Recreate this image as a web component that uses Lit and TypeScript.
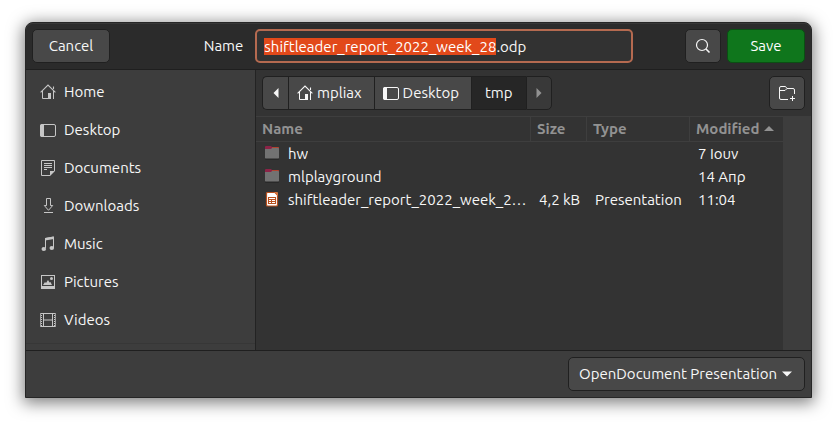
import { LitElement, html, css, svg, nothing } from "lit";
import type { TemplateResult, SVGTemplateResult } from "lit";
import { customElement, property, query } from "lit/decorators.js";

const glyphs: Record<string, SVGTemplateResult> = {
  home: svg`
    <path d="M.6 8.4 8 1l7.4 7.4M13.5 5V2.5" fill="none" stroke="currentColor" stroke-width="1.1"/>
    <path d="M2.5 7v7.5H9M13.5 7v8" fill="none" stroke="currentColor"/>
    <path d="M8 9h3v6H8z" fill="currentColor"/>`,
  desktop: svg`
    <rect x=".5" y="2.5" width="15" height="12" rx="1.5" fill="none" stroke="currentColor"/>
    <path d="M2 2h2v13H2A2 2 0 0 1 0 13V4a2 2 0 0 1 2-2z" fill="currentColor"/>`,
  documents: svg`
    <path d="M10 15.5H1.5V.5h13V11" fill="none" stroke="currentColor"/>
    <path d="M10 11h5l-5 5zM4 3h8v1H4zM4 5h8v1H4zM4 7h8v1H4zM4 9h3v1H4z" fill="currentColor"/>`,
  downloads: svg`
    <path d="M6.500 .5h4v7h2.200L8.500 12.300 4.300 7.500h2.200z" fill="none" stroke="currentColor"/>
    <path d="M4 14h9v1H4z" fill="currentColor"/>`,
  music: svg`
    <path d="M5.500 12V2.500l8-1.500v11" fill="none" stroke="currentColor"/>
    <path d="M5 2l9-1.500v2.500L5 4.500z" fill="currentColor"/>
    <ellipse cx="3.800" cy="13" rx="2.300" ry="1.900" fill="currentColor"/>
    <ellipse cx="11.800" cy="12" rx="2.300" ry="1.900" fill="currentColor"/>`,
  pictures: svg`
    <path fill-rule="evenodd" d="M1 1h14v14H1zM2 2v10h12V2z" fill="currentColor"/>
    <path d="M3 11l2-3 1 1 2-3 1.500 2.500L10.500 8 12 11z" fill="currentColor"/>
    <circle cx="11.500" cy="4.500" r="1.500" fill="currentColor"/>`,
  videos: svg`
    <path d="M3.500 1.500h9v13h-9zM3.500 8h9" fill="none" stroke="currentColor"/>
    <path d="M1.500 1v14M14.500 1v14" fill="none" stroke="currentColor" stroke-dasharray="1 1"/>
    <path d="M.5 1v14M15.500 1v14" fill="none" stroke="currentColor" opacity=".7"/>
    <path d="M1 1h14v1H1zM1 14h14v1H1z" fill="currentColor"/>`,
  search: svg`
    <circle cx="7" cy="7" r="5.500" fill="none" stroke="currentColor" stroke-width="1.200"/>
    <path d="M11 11l3.500 3.500" fill="none" stroke="currentColor" stroke-width="1.600"/>`,
  newFolder: svg`
    <path d="M9 14.500H2A1.500 1.500 0 0 1 .5 13V3A1.500 1.500 0 0 1 2 1.500h4.500L8 3.500h6A1.500 1.500 0 0 1 15.500 5v4M.5 5.500H6l2-2" fill="none" stroke="currentColor"/>
    <path d="M13.500 11v5M11 13.500h5" fill="none" stroke="currentColor"/>`,
  left: svg`<path d="M10.500 3v10l-5-5z" fill="currentColor"/>`,
  right: svg`<path d="M5.500 3v10l5-5z" fill="currentColor"/>`,
  down: svg`<path d="M3 5.500h10l-5 5z" fill="currentColor"/>`,
  up: svg`<path d="M3 10h10L8 5z" fill="currentColor"/>`,
  folder: svg`
    <path d="M1 2a1 1 0 0 1 1-1h5l1 1h6a1 1 0 0 1 1 1v3H1z" fill="#8c2347"/>
    <path d="M8 2h6a1 1 0 0 1 1 1v1H8z" fill="#b0442f"/>
    <path d="M1 4h6l1-1h6a1 1 0 0 1 1 1v9a1 1 0 0 1-1 1H2a1 1 0 0 1-1-1z" fill="#727272"/>
    <path d="M1 13.500h14v.5a1 1 0 0 1-1 1H2a1 1 0 0 1-1-1z" fill="#282828"/>`,
  presentation: svg`
    <path d="M3 1.500h8l2.500 2.500v10a1 1 0 0 1-1 1H3.500a1 1 0 0 1-1-1v-11.500a1 1 0 0 1 1-1z" fill="#fff" stroke="#b8501e" stroke-width="1.200"/>
    <path d="M10 1h3a1 1 0 0 1 1 1v3z" fill="#d9743c"/>
    <path fill-rule="evenodd" d="M4 6h8v7H4zM5 7v1h6V7zM5 9v1h2V9zM8 9v1h3V9zM5 11v1h2v-1zM8 11v1h3v-1z" fill="#b8501e"/>`,
};

@customElement("sym-icon")
class SymIcon extends LitElement {
  @property() name = "home";

  static styles = css`
    :host { display: block; flex: none; width: 16px; height: 16px; }
    .glyph { display: block; width: 16px; height: 16px; }
  `;

  render() {
    return html`<svg class="glyph" viewBox="0 0 16 16" aria-hidden="true">${glyphs[this.name]}</svg>`;
  }
}

interface FileRow {
  icon: string;
  name: string;
  size: string;
  type: string;
  modified: string;
}

const places = ["Home", "Desktop", "Documents", "Downloads", "Music", "Pictures", "Videos"];

const files: FileRow[] = [
  { icon: "folder", name: "hw", size: "", type: "", modified: "7 Ιουν" },
  { icon: "folder", name: "mlplayground", size: "", type: "", modified: "14 Απρ" },
  {
    icon: "presentation",
    name: "shiftleader_report_2022_week_2…",
    size: "4,2 kB",
    type: "Presentation",
    modified: "11:04",
  },
];

@customElement("app-root")
class AppRoot extends LitElement {
  @query("#filename") nameField!: HTMLInputElement;

  static styles = css`
    :host {
      display: flex;
      box-sizing: border-box;
      min-height: 100vh;
      padding: 22px 25px 28px;
      background: #fff;
      color: #f7f7f7;
      font: 15px/20px Ubuntu, "Noto Sans", sans-serif;
    }
    * { box-sizing: border-box; }
    button, input, select { font: inherit; color: inherit; margin: 0; outline: none; }

    .dialog {
      flex: 1;
      min-width: 0;
      display: flex;
      flex-direction: column;
      border: 1px solid #262626;
      border-radius: 8px 8px 0 0;
      background: #3d3d3d;
      box-shadow: 0 3px 16px 2px rgba(0, 0, 0, 0.5);
    }

    .header {
      display: grid;
      grid-template-columns: 1fr auto 1fr;
      align-items: center;
      padding: 6px;
      border-bottom: 1px solid #1f1f1f;
      border-radius: 7px 7px 0 0;
      background: #2b2b2b;
      box-shadow: inset 0 1px #383838;
    }
    .title { display: flex; align-items: center; gap: 12px; }
    .actions { display: flex; justify-content: flex-end; gap: 6px; }

    .button {
      display: flex;
      align-items: center;
      justify-content: center;
      gap: 4px;
      height: 34px;
      padding: 0 8px;
      border: 1px solid #202020;
      border-radius: 5px;
      background: #484848;
    }
    .wide { width: 78px; }
    .square { width: 36px; }
    .save { border-color: #0a4f13; background: #0f761c; color: #fff; }

    .entry {
      width: 378px;
      height: 34px;
      padding: 0 7px;
      border: 2px solid #b56a50;
      border-radius: 5px;
      background: #323232;
    }
    .entry::selection { background: #e2491a; color: #fff; }

    .body { flex: 1; display: flex; min-height: 0; }
    .sidebar {
      width: 230px;
      padding: 3px 0 6px;
      border-right: 1px solid #232323;
    }
    .places { margin: 0; padding: 0 0 4px; list-style: none; border-bottom: 1px solid #373737; }
    .place {
      display: flex;
      align-items: center;
      gap: 8px;
      height: 38px;
      padding: 0 14px;
      color: inherit;
      text-decoration: none;
    }
    .place sym-icon { color: #c6c6c6; }

    .content { flex: 1; min-width: 0; display: flex; flex-direction: column; background: #333; }
    .location { display: flex; justify-content: space-between; padding: 6px; }
    .path { display: flex; }
    .path .button { border-radius: 0; border-right-width: 0; padding: 0 12px 0 8px; }
    .path .button:first-child { border-radius: 5px 0 0 5px; }
    .path .button:last-child { border-radius: 0 5px 5px 0; border-right-width: 1px; }
    .path .arrow { width: 26px; padding: 0; }
    .path .current { background: #262626; padding: 0 13px; }
    .path .arrow:disabled { background: #393939; color: #929292; }

    .listing { flex: 1; display: flex; background: #3d3d3d; }
    .view { flex: 1; min-width: 0; margin-right: 28px; background: #333; }
    .files { width: 100%; table-layout: fixed; border-collapse: separate; border-spacing: 0; }
    .col-size { width: 56px; }
    .col-type { width: 103px; }
    .col-modified { width: 93px; }
    .files th {
      height: 26px;
      padding: 0;
      border: 1px solid #3e3e3e;
      border-left-width: 0;
      color: #929292;
      text-align: left;
    }
    .files th:last-child { border-right-width: 0; }
    .sort {
      display: flex;
      align-items: center;
      gap: 2px;
      width: 100%;
      padding: 0 6px;
      border: 0;
      background: none;
      font-weight: 700;
    }
    .files td { height: 23px; padding: 0 0 0 8px; line-height: 23px; white-space: nowrap; }
    .file { display: flex; align-items: center; gap: 8px; }
    .file sym-icon { height: 17px; }
    .filename { overflow: hidden; text-overflow: ellipsis; }

    .footer { display: flex; justify-content: flex-end; padding: 6px; border-top: 1px solid #1f1f1f; }
    .filter { position: relative; display: flex; }
    .filter select {
      height: 34px;
      padding: 0 26px 0 10px;
      border: 1px solid #202020;
      border-radius: 5px;
      background: #484848;
      appearance: none;
    }
    .filter sym-icon { position: absolute; right: 10px; top: 9px; pointer-events: none; }
  `;

  firstUpdated() {
    const field = this.nameField;
    field.focus();
    field.setSelectionRange(0, field.value.lastIndexOf("."));
  }

  private header(label: string, sorted = false): TemplateResult {
    return html`<th scope="col" aria-sort=${sorted ? "ascending" : "none"}>
      <button class="sort">${label}${sorted ? html`<sym-icon name="up"></sym-icon>` : nothing}</button>
    </th>`;
  }

  render() {
    return html`
      <main class="dialog">
        <header class="header">
          <div><button class="button wide">Cancel</button></div>
          <div class="title">
            <label for="filename">Name</label>
            <input id="filename" class="entry" type="text" spellcheck="false" autocomplete="off"
              .value=${"shiftleader_report_2022_week_28.odp"} />
          </div>
          <div class="actions">
            <button class="button square" aria-label="Search"><sym-icon name="search"></sym-icon></button>
            <button class="button wide save">Save</button>
          </div>
        </header>

        <div class="body">
          <nav class="sidebar" aria-label="Places">
            <ul class="places">
              ${places.map(
                (place) => html`<li>
                  <a class="place" href="#${place.toLowerCase()}">
                    <sym-icon name=${place.toLowerCase()}></sym-icon>${place}
                  </a>
                </li>`,
              )}
            </ul>
          </nav>

          <section class="content">
            <div class="location">
              <nav class="path" aria-label="Path">
                <button class="button arrow" aria-label="Back"><sym-icon name="left"></sym-icon></button>
                <button class="button"><sym-icon name="home"></sym-icon>mpliax</button>
                <button class="button"><sym-icon name="desktop"></sym-icon>Desktop</button>
                <button class="button current" aria-current="location">tmp</button>
                <button class="button arrow" aria-label="Forward" disabled><sym-icon name="right"></sym-icon></button>
              </nav>
              <button class="button square" aria-label="Create Folder"><sym-icon name="newFolder"></sym-icon></button>
            </div>

            <div class="listing">
              <div class="view">
                <table class="files">
                  <colgroup>
                    <col />
                    <col class="col-size" />
                    <col class="col-type" />
                    <col class="col-modified" />
                  </colgroup>
                  <thead>
                    <tr>
                      ${this.header("Name")}${this.header("Size")}${this.header("Type")}${this.header("Modified", true)}
                    </tr>
                  </thead>
                  <tbody>
                    ${files.map(
                      (file) => html`<tr>
                        <td>
                          <div class="file">
                            <sym-icon name=${file.icon}></sym-icon><span class="filename">${file.name}</span>
                          </div>
                        </td>
                        <td>${file.size}</td>
                        <td>${file.type}</td>
                        <td>${file.modified}</td>
                      </tr>`,
                    )}
                  </tbody>
                </table>
              </div>
            </div>
          </section>
        </div>

        <footer class="footer">
          <div class="filter">
            <select aria-label="File type">
              <option>OpenDocument Presentation</option>
            </select>
            <sym-icon name="down"></sym-icon>
          </div>
        </footer>
      </main>
    `;
  }
}
